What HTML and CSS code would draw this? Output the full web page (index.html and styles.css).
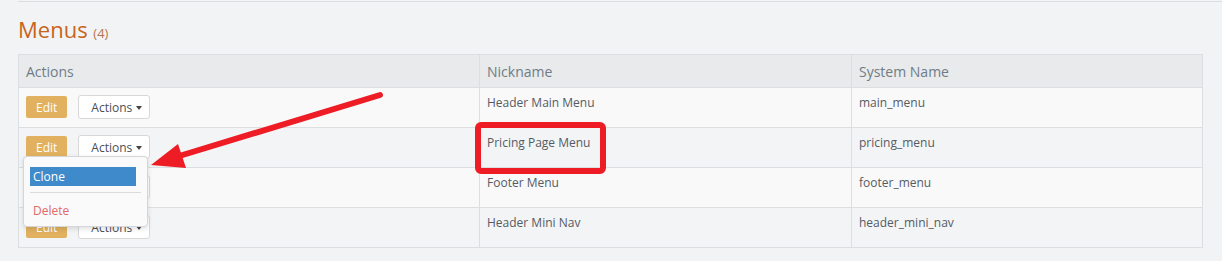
FILE: index.html
```html
<!DOCTYPE html>
<html lang="en">
<head>
  <meta charset="UTF-8">
  <meta name="viewport" content="width=device-width, initial-scale=1.0">
  <title>Menus</title>
  <link rel="stylesheet" href="styles.css">
</head>
<body>
  <div class="page">
    <div class="rule"></div>
    <h2 class="title">Menus <small>(4)</small></h2>
    <table class="grid">
      <thead>
        <tr><th class="col-actions">Actions</th><th class="col-nick">Nickname</th><th>System Name</th></tr>
      </thead>
      <tbody>
        <tr>
          <td><div class="btns"><button class="btn-edit">Edit</button><button class="btn-act">Actions <i class="caret"></i></button></div></td>
          <td>Header Main Menu</td><td>main_menu</td>
        </tr>
        <tr>
          <td>
            <div class="btns"><button class="btn-edit">Edit</button><button class="btn-act">Actions <i class="caret"></i></button>
              <ul class="menu">
                <li class="active">Clone</li>
                <li class="divider"></li>
                <li class="danger">Delete</li>
              </ul>
            </div>
          </td>
          <td>Pricing Page Menu</td><td>pricing_menu</td>
        </tr>
        <tr>
          <td><div class="btns"><button class="btn-edit">Edit</button><button class="btn-act">Actions <i class="caret"></i></button></div></td>
          <td>Footer Menu</td><td>footer_menu</td>
        </tr>
        <tr>
          <td><div class="btns"><button class="btn-edit">Edit</button><button class="btn-act">Actions <i class="caret"></i></button></div></td>
          <td>Header Mini Nav</td><td>header_mini_nav</td>
        </tr>
      </tbody>
    </table>
  </div>
  <!-- annotation drawn over the screenshot -->
  <svg class="markup" width="1222" height="261" viewBox="0 0 1222 261">
    <rect x="478" y="125" width="125" height="46" rx="3" fill="none" stroke="#ee1c25" stroke-width="6"/>
    <line x1="380" y1="95" x2="176" y2="157" stroke="#ee1c25" stroke-width="6" stroke-linecap="round"/>
    <polygon points="151,165 178,144 186,168" fill="#ee1c25"/>
  </svg>
</body>
</html>
```

FILE: styles.css
```css
body{ margin:0; padding:0; background:#f2f3f5; font-family:"Open Sans","Noto Sans",sans-serif; color:#555b64; }
.page{ padding:0 19px 0 18px; }
.rule{ height:1px; background:#dcdfe2; margin:1px -19px 0 0; }
.title{ margin:15px 0 13px; font-size:22px; line-height:24px; height:24px; font-weight:400; color:#c8641c; }
.title small{ font-size:13px; line-height:0; color:#b8744a; }

.grid{ width:100%; border-collapse:collapse; border:1px solid #dcdfe2; font-size:12px; }
.grid th,.grid td{ border:1px solid #dcdfe2; text-align:left; }
.grid th{ background:#e8eaeb; color:#6f7c87; font-size:14px; font-weight:400; line-height:17px; padding:8px 7px 7px; }
.grid td{ padding:7px 7px 8px; line-height:16px; vertical-align:top; height:24px; }
.grid tbody tr:nth-child(odd){ background:#f9f9f9; }
.grid tbody tr:nth-child(even){ background:#f3f4f5; }
.col-actions{ width:446px; }
.col-nick{ width:357px; }

.btns{ position:relative; display:flex; align-items:center; gap:11px; height:24px; }
.btns button{ font-family:inherit; font-size:12px; margin:0; cursor:pointer; }
.btn-edit{ height:22px; padding:0 10px; border:0; border-radius:2px; background:#e1b15f; color:#fff; }
.btn-act{ height:24px; width:72px; padding:0 0 0 12px; text-align:left; border:1px solid #d8d8d8; border-radius:3px; background:#fff; color:#4a4f57; }
.caret{ display:inline-block; margin-left:1px; vertical-align:2px; border-top:4px solid #444; border-left:3px solid transparent; border-right:3px solid transparent; }

.menu{
  position:absolute; z-index:10; left:-3px; top:21px; width:123px; height:59px; margin:0; padding:10px 0 0; list-style:none;
  background:#fafafa; border:1px solid #d4d6d9; border-radius:4px; box-shadow:0 2px 5px rgba(0,0,0,.12);
}
.menu li{ margin:0 6px; padding:0 3px; line-height:19px; }
.menu .active{ background:#3e8acb; color:#fff; margin-right:11px; }
.menu .divider{ height:1px; background:#d9dbde; margin:6px 6px 8px; padding:0; }
.menu .danger{ color:#e0686a; }

.markup{ position:absolute; left:0; top:0; pointer-events:none; }
```
